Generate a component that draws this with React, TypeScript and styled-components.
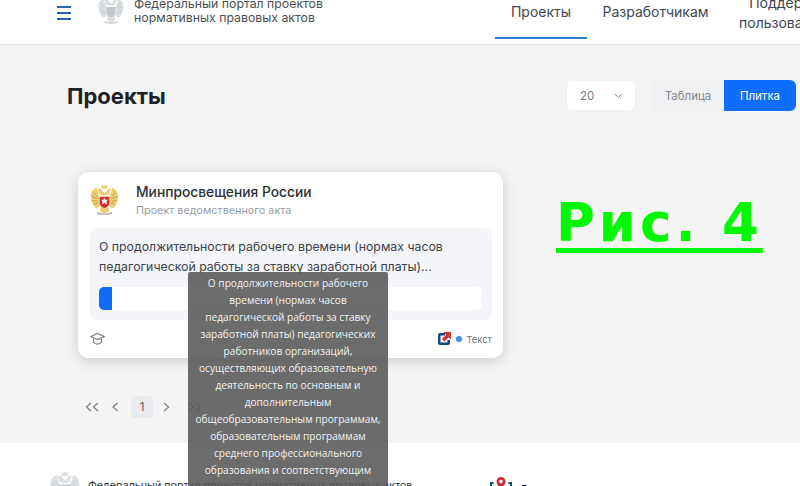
import React from "react";
import styled, { createGlobalStyle } from "styled-components";

const Global = createGlobalStyle`
  html, body { margin: 0; padding: 0; background: #f4f4f4; }
  * { box-sizing: border-box; }
`;

const Page = styled.div`
  position: relative;
  width: 800px;
  height: 486px;
  overflow: hidden;
  background: #f4f4f4;
  font-family: Inter, "Liberation Sans", sans-serif;
  color: #21262c;
`;

const Header = styled.header`
  display: flex;
  align-items: flex-start;
  height: 45px;
  background: #fff;
  border-bottom: 1px solid #e6e7e8;
`;

const Burger = styled.div`
  display: flex;
  flex: none;
  flex-direction: column;
  gap: 4px;
  width: 14px;
  margin: 6px 0 0 57px;
  & > i { display: block; height: 2px; background: #2a62b4; }
`;

const LogoSlot = styled.div`
  flex: none;
  margin: -5px 0 0 27px;
  width: 26px;
  height: 30px;
`;

const PortalName = styled.div`
  flex: none;
  margin: -3px 0 0 10px;
  width: 361px;
  font-size: 12.3px;
  line-height: 14px;
  white-space: nowrap;
  color: #4a4f55;
`;

const Nav = styled.nav`
  display: flex;
  flex: none;
  height: 39px;
`;

const NavItem = styled.div<{ $active?: boolean; $w: number }>`
  width: ${(p) => p.$w}px;
  height: 39px;
  padding-top: 2px;
  text-align: center;
  font-size: 14px;
  line-height: 19px;
  color: #42474d;
  flex: none;
  border-bottom: 2px solid ${(p) => (p.$active ? "#2b7bcf" : "transparent")};
`;

const SupportItem = styled.div`
  flex: none;
  width: 100px;
  margin: -7px 0 0 15px;
  text-align: center;
  font-size: 14px;
  line-height: 20px;
  white-space: nowrap;
  color: #42474d;
`;

const Main = styled.main`
  height: 398px;
  padding: 35px 4px 0 67px;
`;

const TitleRow = styled.div`
  display: flex;
  align-items: center;
  height: 31px;
`;

const Title = styled.h1`
  margin: 0;
  flex: 1;
  font-size: 22px;
  font-weight: 700;
  color: #1d2126;
`;

const SizeSelect = styled.div`
  display: flex;
  align-items: center;
  justify-content: space-between;
  width: 70px;
  height: 31px;
  padding: 0 12px 0 13px;
  border: 1px solid #f0f0f0;
  border-radius: 6px;
  background: #fff;
  font-size: 11.5px;
  color: #777c82;
`;

const Toggle = styled.div`
  display: flex;
  height: 31px;
  margin-left: 16px;
  border-radius: 6px;
  overflow: hidden;
`;

const ToggleButton = styled.div<{ $on?: boolean }>`
  display: flex;
  align-items: center;
  justify-content: center;
  width: 72px;
  font-size: 11.5px;
  background: ${(p) => (p.$on ? "#0d6efd" : "#eff0f2")};
  color: ${(p) => (p.$on ? "#fff" : "#858b91")};
`;

const Card = styled.article`
  width: 425px;
  height: 186px;
  margin: 61px 0 0 11px;
  padding: 12px 11px 0 12px;
  background: #fff;
  border-radius: 10px;
  box-shadow: 0 3px 14px rgba(0, 0, 0, 0.17);
`;

const CardHead = styled.div`
  display: flex;
  align-items: flex-start;
  height: 44px;
`;

const Agency = styled.div`
  margin: -1px 0 0 17px;
`;

const AgencyName = styled.div`
  font-size: 13.8px;
  line-height: 18px;
  font-weight: 500;
  color: #2b2f34;
`;

const AgencyKind = styled.div`
  font-size: 10.8px;
  line-height: 15px;
  margin-top: 2px;
  color: #9aa0a6;
`;

const CardBody = styled.div`
  height: 92px;
  padding: 9px 10px 0 9px;
  border-radius: 8px;
  background: #f4f5f8;
`;

const CardText = styled.div`
  font-size: 12.3px;
  line-height: 20px;
  color: #3d4248;
  white-space: nowrap;
`;

const Progress = styled.div`
  height: 23px;
  margin-top: 10px;
  border-radius: 5px;
  background: #fff;
  overflow: hidden;
`;

const ProgressFill = styled.div`
  height: 100%;
  background: #0d6efd;
`;

const CardFoot = styled.div`
  display: flex;
  align-items: center;
  height: 38px;
`;

const Spacer = styled.div`
  flex: 1;
`;

const StatusDot = styled.span`
  width: 6px;
  height: 6px;
  margin: 0 4px 0 5px;
  border-radius: 50%;
  background: #3f8cf5;
`;

const StatusText = styled.span`
  font-size: 9.5px;
  color: #71777d;
`;

const Pager = styled.div`
  display: flex;
  align-items: center;
  height: 22px;
  margin: 38px 0 0 18px;
  color: #777d83;
`;

const PagerArrow = styled.span<{ $w: number }>`
  display: flex;
  flex: none;
  justify-content: center;
  width: ${(p) => p.$w}px;
`;

const PageNumber = styled.div`
  display: flex;
  align-items: center;
  justify-content: center;
  width: 22px;
  height: 22px;
  border-radius: 4px;
  background: #e9ebee;
  font-size: 11.5px;
  color: #4e5359;
`;

const Footer = styled.footer`
  display: flex;
  height: 60px;
  padding: 28px 0 0 50px;
  background: #fff;
`;

const FooterText = styled.div`
  flex: none;
  margin: 8px 0 0 8px;
  width: 401px;
  font-size: 10.7px;
  line-height: 14px;
  white-space: nowrap;
  color: #2c3035;
`;

const PinSlot = styled.div`
  flex: none;
  width: 24px;
  height: 24px;
  margin-top: 6px;
`;

const FooterBrand = styled.div`
  margin: 11px 0 0 8px;
  font-size: 11px;
  line-height: 14px;
  white-space: nowrap;
  color: #2c3035;
`;

const Tooltip = styled.div`
  position: absolute;
  left: 188px;
  top: 272px;
  width: 200px;
  height: 230px;
  padding: 3px 0;
  background: rgba(88, 88, 88, 0.88);
  border-radius: 2px 2px 0 0;
  color: #f2f2f2;
  text-align: center;
  font-size: 10.15px;
  line-height: 17px;
  white-space: nowrap;
  font-family: "Open Sans", Inter, sans-serif;
`;

const Stamp = styled.div`
  position: absolute;
  left: 556px;
  top: 191px;
  font-family: "DejaVu Sans", sans-serif;
  font-size: 53px;
  font-weight: 700;
  line-height: 64px;
  letter-spacing: 4px;
  white-space: nowrap;
  color: #00f800;
  text-decoration: underline;
  text-decoration-thickness: 5px;
  text-underline-offset: 7px;
`;

const Emblem = ({ w, h, body, line, accent }: { w: number; h: number; body: string; line: string; accent?: string }) => (
  <svg width={w} height={h} viewBox="0 0 30 34" aria-hidden="true">
    <path d="M11.500 3l1-2 1 1.200L15 .5l1.500 1.700 1-1.200 1 2-1 2h-5z" fill={body} />
    <path d="M8 5.500c2-1.500 4-.5 4.500 2l2.500 2 2.500-2c.5-2.500 2.500-3.500 4.500-2l-1 1.500-1 3-3 2h-5l-3-2-1-3z" fill={body} />
    <path
      d="M7 4C3 5 0 9 .5 14c.4 5 2.500 9 5.500 12l4-2V14L8 9zM23 4c4 1 6.500 5 6.500 10-.4 5-2.500 9-5.500 12l-4-2V14l2-5z"
      fill={body}
    />
    <path d="M11 24h8l1 5-5 2.500L10 29z" fill={body} />
    <path d="M3 9l4 4M1.700 13l5 2.500M2.200 17.500l5 .8M4 21.500l4-1.500M27 9l-4 4M28.300 13l-5 2.500M27.800 17.500l-5 .8M26 21.500l-4-1.500" stroke={line} strokeWidth=".9" />
    <path d="M10 13.500h10V21c0 2-2.500 3.500-5 4.500-2.500-1-5-2.500-5-4.500z" fill={accent ?? line} />
    {accent && <path d="M15 15l1.500 2 2-.5-1.500 2.500 1 2.500-3-1.200-3 1.200 1-2.500-1.500-2.500 2 .5z" fill="#fff" />}
    <path d="M7 30.500c3 2 13 2 16 0" fill="none" stroke={accent ? "#a9aeae" : line} strokeWidth="1.500" />
  </svg>
);

const Chevron = ({ d, w = 14 }: { d: string; w?: number }) => (
  <svg width={w} height="12" viewBox={`0 0 ${w} 12`} fill="none" stroke="currentColor" strokeWidth="1.2" aria-hidden="true">
    <path d={d} />
  </svg>
);

const SelectCaret = () => (
  <svg width="9" height="6" viewBox="0 0 9 6" fill="none" stroke="#8b9096" strokeWidth="1" aria-hidden="true">
    <path d="M1 1l3.500 3.500L8 1" />
  </svg>
);

const CapIcon = () => (
  <svg width="15" height="14" viewBox="0 0 15 14" fill="none" stroke="#7b8086" strokeWidth="1.300" aria-hidden="true">
    <path d="M1 4.500l6.500-3 6.500 3-6.500 3z" />
    <path d="M3.500 7v3c1 1.500 2.500 2.200 4 2.200s3-.7 4-2.200V7" />
  </svg>
);

const TextBadge = () => (
  <svg width="14" height="14" viewBox="0 0 14 14" aria-hidden="true">
    <path d="M8 1H3a2 2 0 0 0-2 2v8a2 2 0 0 0 2 2h8a2 2 0 0 0 2-2V8h-2.500v2.500h-7v-7H8z" fill="#12477f" />
    <path d="M6.500 0H14v7.500L11.700 5.200 7.500 9.500 5 7l4.200-4.300z" fill="#d5342b" />
  </svg>
);

const PinIcon = () => (
  <svg width="24" height="24" viewBox="0 0 24 24" aria-hidden="true">
    <path d="M2 11V6h2.500M22 11V6h-2.500" fill="none" stroke="#12477f" strokeWidth="2" />
    <path d="M12 0a4.500 4.500 0 0 0-4.500 4.500C7.500 8 12 12 12 12s4.500-4 4.500-7.500A4.500 4.500 0 0 0 12 0z" fill="#c8323a" />
    <circle cx="12" cy="4.500" r="1.800" fill="#fff" />
  </svg>
);

const tooltipLines = [
  "О продолжительности рабочего",
  "времени (нормах часов",
  "педагогической работы за ставку",
  "заработной платы) педагогических",
  "работников организаций,",
  "осуществляющих образовательную",
  "деятельность по основным и",
  "дополнительным",
  "общеобразовательным программам,",
  "образовательным программам",
  "среднего профессионального",
  "образования и соответствующим",
];

export default function App() {
  return (
    <Page>
      <Global />
      <Header>
        <Burger><i /><i /><i /></Burger>
        <LogoSlot><Emblem w={26} h={30} body="#dcdfe1" line="#c2c7ca" /></LogoSlot>
        <PortalName>Федеральный портал проектов<br />нормативных правовых актов</PortalName>
        <Nav>
          <NavItem $active $w={92}>Проекты</NavItem>
          <NavItem $w={137}>Разработчикам</NavItem>
        </Nav>
        <SupportItem>Поддержка<br />пользователей</SupportItem>
      </Header>
      <Main>
        <TitleRow>
          <Title>Проекты</Title>
          <SizeSelect>
            20
            <SelectCaret />
          </SizeSelect>
          <Toggle>
            <ToggleButton>Таблица</ToggleButton>
            <ToggleButton $on>Плитка</ToggleButton>
          </Toggle>
        </TitleRow>
        <Card>
          <CardHead>
            <Emblem w={29} h={32} body="#eccf72" line="#c39a32" accent="#d8282f" />
            <Agency>
              <AgencyName>Минпросвещения России</AgencyName>
              <AgencyKind>Проект ведомственного акта</AgencyKind>
            </Agency>
          </CardHead>
          <CardBody>
            <CardText>
              О продолжительности рабочего времени (нормах часов
              <br />
              педагогической работы за ставку заработной платы)...
            </CardText>
            <Progress>
              <ProgressFill style={{ width: `${(13 / 383) * 100}%` }} />
            </Progress>
          </CardBody>
          <CardFoot>
            <CapIcon />
            <Spacer />
            <TextBadge />
            <StatusDot />
            <StatusText>Текст</StatusText>
          </CardFoot>
        </Card>
        <Pager>
          <PagerArrow $w={14}><Chevron d="M6 2L1.500 6 6 10M13 2L8.500 6l4.500 4" /></PagerArrow>
          <PagerArrow $w={32}><Chevron w={8} d="M6.500 2L2 6l4.500 4" /></PagerArrow>
          <PageNumber>1</PageNumber>
          <PagerArrow $w={25}><Chevron w={8} d="M2 2l4.500 4L2 10" /></PagerArrow>
          <PagerArrow $w={34}><Chevron d="M1 2l4.500 4L1 10M8 2l4.500 4L8 10" /></PagerArrow>
        </Pager>
      </Main>
      <Footer>
        <Emblem w={30} h={34} body="#dcdfe1" line="#c2c7ca" />
        <FooterText>Федеральный портал проектов нормативных правовых актов</FooterText>
        <PinSlot><PinIcon /></PinSlot>
        <FooterBrand>Версия для печати</FooterBrand>
      </Footer>
      <Tooltip>
        {tooltipLines.map((line) => (
          <div key={line}>{line}</div>
        ))}
      </Tooltip>
      <Stamp>Рис. 4</Stamp>
    </Page>
  );
}
